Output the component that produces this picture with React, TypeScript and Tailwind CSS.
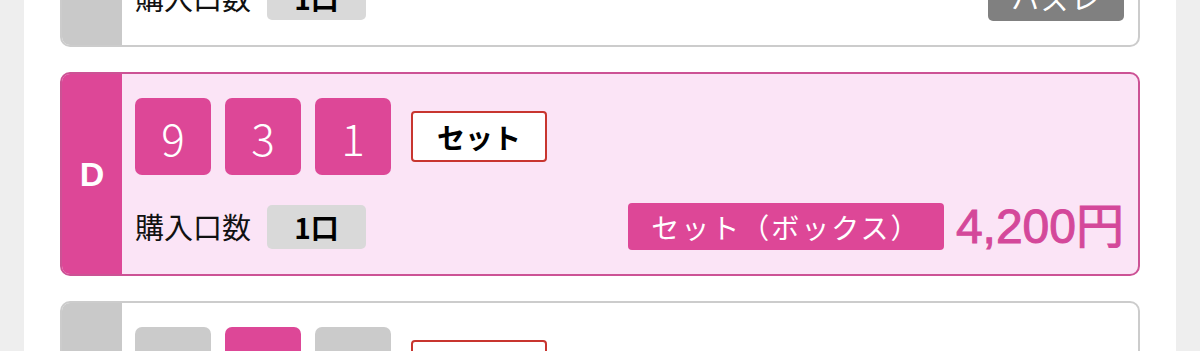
import type { ReactNode } from 'react';

const FONT = { fontFamily: '"Noto Sans CJK JP", "Noto Sans", sans-serif' };
const LATIN = { fontFamily: '"Liberation Sans", "Noto Sans CJK JP", sans-serif' };

type Tone = 'pink' | 'gray';

function NumBox({ n, tone }: { n?: string; tone: Tone }) {
  return (
    <div
      className={
        'w-[76px] h-[77px] rounded-[7px] flex items-center justify-center text-white text-[44px] font-light leading-none ' +
        (tone === 'pink' ? 'bg-[#dd4797]' : 'bg-[#cbcbcb]')
      }
    >
      {n}
    </div>
  );
}

function SetButton() {
  return (
    <div className="ml-[6px] w-[136px] h-[51px] border-2 border-[#c8352f] bg-white rounded-[4px] flex items-center justify-center text-[28px] font-bold text-black leading-none">
      セット
    </div>
  );
}

function Quantity() {
  return (
    <div className="flex items-center">
      <span className="text-[29px] text-[#111] leading-none">購入口数</span>
      <span className="ml-[16px] w-[99px] h-[44px] rounded-[5px] bg-[#d9d9d9] flex items-center justify-center text-[28px] font-bold text-black leading-none">
        1口
      </span>
    </div>
  );
}

interface CardProps {
  label?: string;
  active?: boolean;
  boxes: { n?: string; tone: Tone }[];
  right?: ReactNode;
}

function Card({ label, active, boxes, right }: CardProps) {
  return (
    <div
      className={
        'flex border-2 rounded-[10px] overflow-hidden ' +
        (active ? 'border-[#cc5295] bg-[#fbe4f6]' : 'border-[#cccccc] bg-white')
      }
    >
      <div
        className={
          'w-[60px] flex items-center justify-center text-white text-[34px] font-bold ' +
          (active ? 'bg-[#dd4797]' : 'bg-[#c9c9c9]')
        }
        style={LATIN}
      >
        {label}
      </div>
      <div className="flex-1 pl-[13px] pr-[14px] py-[24px]">
        <div className="flex items-center gap-[14px]">
          {boxes.map((b, i) => (
            <NumBox key={i} n={b.n} tone={b.tone} />
          ))}
          <SetButton />
        </div>
        <div className="mt-[28px] h-[47px] flex items-center">
          <Quantity />
          <div className="ml-auto flex items-center">{right}</div>
        </div>
      </div>
    </div>
  );
}

export default function App() {
  return (
    <div className="w-full h-[351px] overflow-hidden bg-[#eeeeee]" style={FONT}>
      <div className="w-[1152px] h-full ml-[24px] bg-white px-[36px] flex flex-col">
        <div className="mt-[-157px] flex flex-col gap-[25px]">
          <Card
            boxes={[
              { tone: 'gray' },
              { tone: 'gray' },
              { tone: 'gray' },
            ]}
            right={
              <div className="w-[136px] h-[47px] rounded-[5px] bg-[#808080] flex items-center justify-center text-white text-[28px] tracking-[2px] leading-none">
                ハズレ
              </div>
            }
          />
          <Card
            label="D"
            active
            boxes={[
              { n: '9', tone: 'pink' },
              { n: '3', tone: 'pink' },
              { n: '1', tone: 'pink' },
            ]}
            right={
              <>
                <div className="w-[316px] h-[47px] rounded-[4px] bg-[#dd4797] flex items-center justify-center text-white text-[28px] tracking-[2px] leading-none">
                  セット（ボックス）
                </div>
                <span
                  className="ml-[12px] text-[48px] text-[#d4489a] leading-none [-webkit-text-stroke:1px_#d4489a]"
                  style={LATIN}
                >
                  4,200円
                </span>
              </>
            }
          />
          <Card
            boxes={[
              { tone: 'gray' },
              { n: '', tone: 'pink' },
              { tone: 'gray' },
            ]}
          />
        </div>
      </div>
    </div>
  );
}
